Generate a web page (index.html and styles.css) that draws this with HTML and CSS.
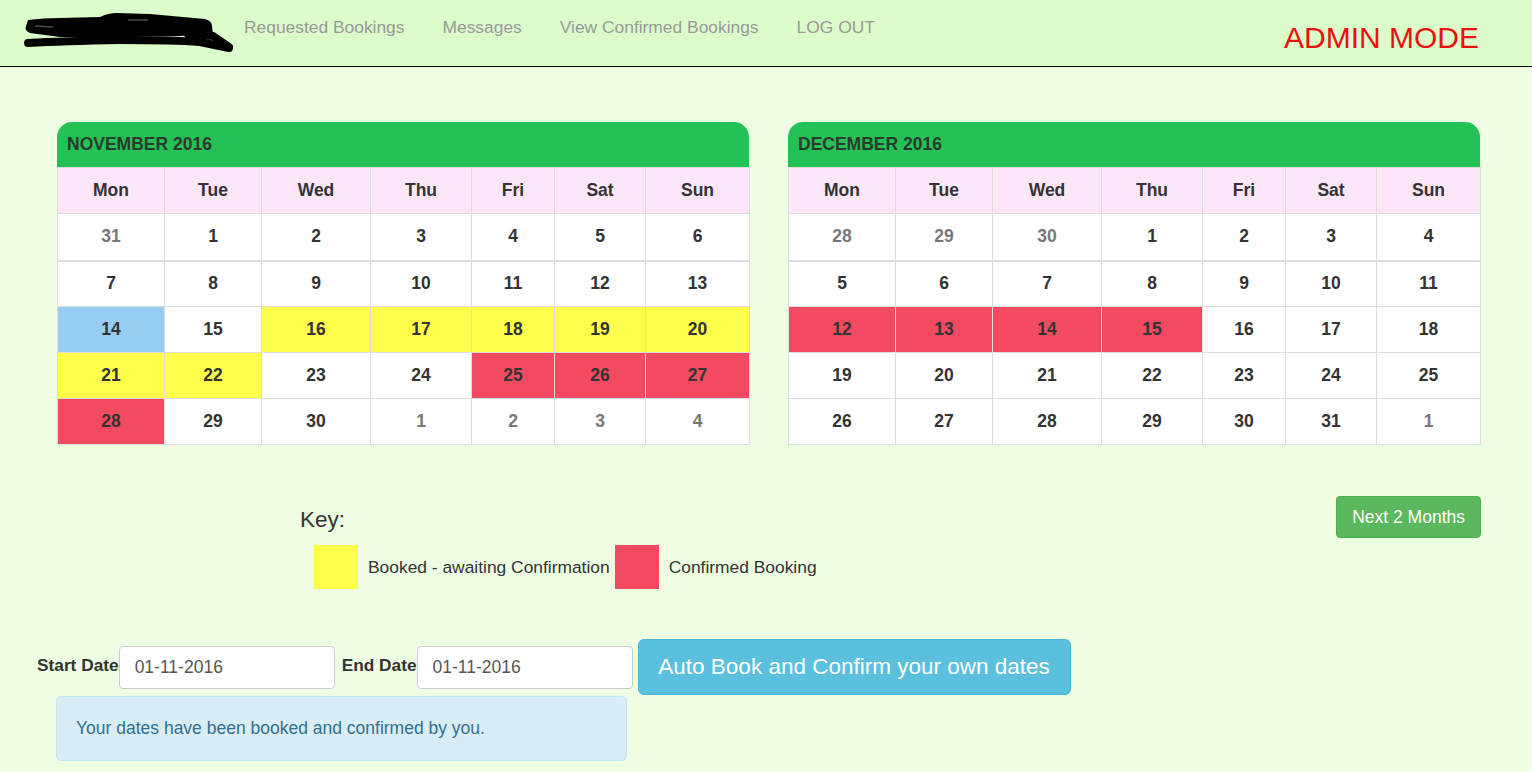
FILE: index.html
```html
<!DOCTYPE html>
<html lang="en">
<head>
<meta charset="utf-8">
<title>Admin - Bookings</title>
<link rel="stylesheet" href="styles.css">
</head>
<body>
<header class="topbar">
  <a class="logo" href="#" aria-label="Logo">
    <svg width="212" height="42" viewBox="0 0 212 42">
      <path d="M5 8 Q20 6 37 6 L77 5 Q85 1 94 1 L127 2 L182 7 Q189 9 189 14 L190 22 L157 24 L97 25 L37 25 L22 23 L7 21 Q1 18 3 14 Z" fill="#000"/>
      <path d="M5 31 Q40 29 97 28 Q150 28 177 30 L206 36" stroke="#000" stroke-width="8" stroke-linecap="round" stroke-linejoin="round" fill="none"/>
      <path d="M165 22 L190 24 L206 35" stroke="#000" stroke-width="8" stroke-linecap="round" stroke-linejoin="round" fill="none"/>
      <path d="M12 14 L30 15" stroke="#4a4a4a" stroke-width="1.5" fill="none"/>
      <path d="M105 8 L125 8" stroke="#4a4a4a" stroke-width="1.5" fill="none"/>
    </svg>
  </a>
  <nav class="nav">
    <a href="#">Requested Bookings</a>
    <a href="#">Messages</a>
    <a href="#">View Confirmed Bookings</a>
    <a href="#">LOG OUT</a>
  </nav>
  <div class="mode">ADMIN MODE</div>
</header>

<main class="page">
  <section class="calendars">
    <div class="cal">
      <div class="cal-title">NOVEMBER 2016</div>
      <table class="cal-table">
        <thead>
          <tr><th>Mon</th><th>Tue</th><th>Wed</th><th>Thu</th><th>Fri</th><th>Sat</th><th>Sun</th></tr>
        </thead>
        <tbody>
          <tr class="first-week"><td class="other">31</td><td>1</td><td>2</td><td>3</td><td>4</td><td>5</td><td>6</td></tr>
          <tr><td>7</td><td>8</td><td>9</td><td>10</td><td>11</td><td>12</td><td>13</td></tr>
          <tr><td class="today">14</td><td>15</td><td class="pending">16</td><td class="pending">17</td><td class="pending">18</td><td class="pending">19</td><td class="pending">20</td></tr>
          <tr><td class="pending">21</td><td class="pending">22</td><td>23</td><td>24</td><td class="confirmed">25</td><td class="confirmed">26</td><td class="confirmed">27</td></tr>
          <tr><td class="confirmed">28</td><td>29</td><td>30</td><td class="other">1</td><td class="other">2</td><td class="other">3</td><td class="other">4</td></tr>
        </tbody>
      </table>
    </div>
    <div class="cal">
      <div class="cal-title">DECEMBER 2016</div>
      <table class="cal-table">
        <thead>
          <tr><th>Mon</th><th>Tue</th><th>Wed</th><th>Thu</th><th>Fri</th><th>Sat</th><th>Sun</th></tr>
        </thead>
        <tbody>
          <tr class="first-week"><td class="other">28</td><td class="other">29</td><td class="other">30</td><td>1</td><td>2</td><td>3</td><td>4</td></tr>
          <tr><td>5</td><td>6</td><td>7</td><td>8</td><td>9</td><td>10</td><td>11</td></tr>
          <tr><td class="confirmed">12</td><td class="confirmed">13</td><td class="confirmed">14</td><td class="confirmed">15</td><td>16</td><td>17</td><td>18</td></tr>
          <tr><td>19</td><td>20</td><td>21</td><td>22</td><td>23</td><td>24</td><td>25</td></tr>
          <tr><td>26</td><td>27</td><td>28</td><td>29</td><td>30</td><td>31</td><td class="other">1</td></tr>
        </tbody>
      </table>
    </div>
  </section>

  <section class="key-row">
    <div class="key">
      <h4 class="key-title">Key:</h4>
      <div class="legend">
        <span class="swatch swatch-pending"></span>
        <span class="legend-text legend-text-first">Booked - awaiting Confirmation</span>
        <span class="swatch swatch-confirmed"></span>
        <span class="legend-text">Confirmed Booking</span>
      </div>
    </div>
    <button class="btn btn-next" type="button">Next 2 Months</button>
  </section>

  <form class="book-form">
    <label class="form-label" for="start">Start Date</label>
    <input class="form-input" id="start" type="text" value="01-11-2016">
    <label class="form-label form-label-end" for="end">End Date</label>
    <input class="form-input" id="end" type="text" value="01-11-2016">
    <button class="btn btn-auto" type="button">Auto Book and Confirm your own dates</button>
  </form>

  <div class="alert">Your dates have been booked and confirmed by you.</div>
</main>
</body>
</html>
```

FILE: styles.css
```css
* { box-sizing: border-box; }

html, body {
  margin: 0;
  padding: 0;
}

body {
  background: #eefee2;
  font-family: "Liberation Sans", Arial, sans-serif;
  font-size: 17.5px;
  color: #333;
  height: 772px;
  overflow: hidden;
}

/* ---------- top bar ---------- */
.topbar {
  display: flex;
  align-items: flex-start;
  height: 67px;
  background: #dbfdcb;
  border-bottom: 1px solid #000;
}

.logo {
  display: block;
  margin: 12px 0 0 23px;
  width: 212px;
  height: 42px;
}

.logo svg { display: block; }

.nav {
  display: flex;
  gap: 38px;
  margin: 17px 0 0 9px;
}

.nav a {
  color: #999;
  text-decoration: none;
  line-height: 20px;
  font-size: 17.4px;
}

.mode {
  margin: 21px 53px 0 auto;
  color: #ee0f0f;
  font-size: 30px;
  line-height: 34px;
}

/* ---------- calendars ---------- */
.page {
  display: flex;
  flex-direction: column;
}

.calendars {
  display: flex;
  gap: 39px;
  padding: 55px 0 0 57px;
}

.cal {
  width: 692px;
}

.cal-title {
  height: 45px;
  line-height: 45px;
  padding-left: 10px;
  background: #24c155;
  border-radius: 15px 15px 0 0;
  font-weight: bold;
  color: #2b3a2e;
}

.cal-table {
  width: 100%;
  border-collapse: collapse;
  table-layout: fixed;
  background: #fff;
}

.cal-table th,
.cal-table td {
  border: 1px solid #ddd;
  height: 46px;
  padding: 0;
  text-align: center;
  vertical-align: middle;
  font-weight: bold;
  color: #333;
}

.cal-table .first-week td {
  height: 47px;
  border-bottom-width: 2px;
}

.cal-table th {
  background: #fde6f8;
}

.cal-table th:nth-child(1) { width: 107px; }
.cal-table th:nth-child(2) { width: 97px; }
.cal-table th:nth-child(3) { width: 109px; }
.cal-table th:nth-child(4) { width: 101px; }
.cal-table th:nth-child(5) { width: 83px; }
.cal-table th:nth-child(6) { width: 91px; }
.cal-table th:nth-child(7) { width: 104px; }

.cal-table td.other { color: #777; }
.cal-table td.today { background: #95cef2; }
.cal-table td.pending { background: #ffff4c; }
.cal-table td.confirmed { background: #f24a60; }

/* ---------- key row ---------- */
.key-row {
  display: flex;
  justify-content: space-between;
  align-items: flex-start;
  margin-top: 51px;
  padding: 0 51px 0 300px;
}

.key {
  padding-top: 11px;
}

.key-title {
  margin: 0;
  font-size: 22.5px;
  font-weight: normal;
  line-height: 26px;
  color: #333;
}

.legend {
  display: flex;
  align-items: center;
  margin-top: 12px;
  padding-left: 14px;
}

.swatch {
  width: 44px;
  height: 44px;
  display: block;
}

.swatch-pending { background: #ffff4c; }
.swatch-confirmed { background: #f24a60; }

.legend-text {
  margin-left: 10px;
  color: #333;
  font-size: 17.4px;
}

.legend-text-first { margin-right: 5px; }

.btn {
  font-family: "Liberation Sans", Arial, sans-serif;
  color: #fff;
  cursor: pointer;
  white-space: nowrap;
}

.btn-next {
  height: 42px;
  padding: 0 15px;
  font-size: 17.5px;
  background: #5cb85c;
  border: 1px solid #4cae4c;
  border-radius: 4px;
}

/* ---------- booking form ---------- */
.book-form {
  display: flex;
  align-items: center;
  margin-top: 50px;
  padding-left: 37px;
}

.form-label {
  font-weight: bold;
  color: #333;
  margin-top: -4px;
  font-size: 17.3px;
}

.form-label-end { margin-left: 7px; }

.form-input {
  width: 216px;
  height: 43px;
  margin-top: 1px;
  padding: 0 15px;
  font-family: "Liberation Sans", Arial, sans-serif;
  font-size: 17.5px;
  color: #555;
  background: #fff;
  border: 1px solid #ccc;
  border-radius: 4px;
}

.btn-auto {
  margin-left: 5px;
  width: 433px;
  height: 56px;
  padding: 0;
  font-size: 22.5px;
  background: #5bc0de;
  border: 1px solid #46b8da;
  border-radius: 6px;
}

.alert {
  margin: 1px 0 0 56px;
  width: 571px;
  height: 65px;
  padding: 0 19px;
  display: flex;
  align-items: center;
  background: #d9edf7;
  border: 1px solid #bce8f1;
  border-radius: 5px;
  color: #31708f;
}
```
